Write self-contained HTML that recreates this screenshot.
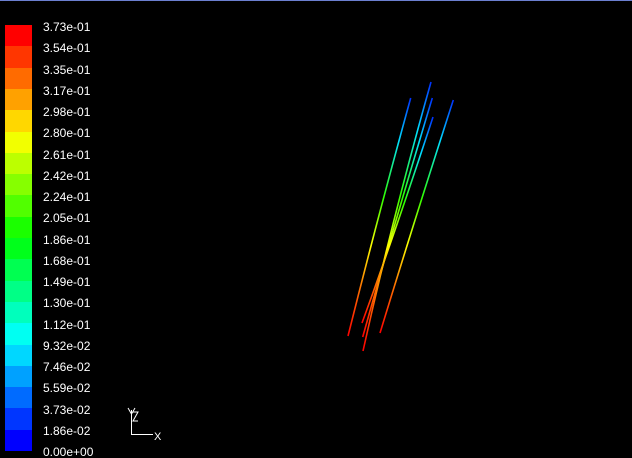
<!DOCTYPE html>
<html><head><style>
html,body{margin:0;padding:0;background:#000;width:632px;height:458px;overflow:hidden;position:relative;font-family:"Liberation Sans",sans-serif}
.top{position:absolute;left:0;top:0;width:632px;height:1px;background:#6b7fd0}
.bar{position:absolute;left:5px;width:27px}
.lbl{position:absolute;left:43px;color:#fff;font-size:12px;line-height:12px}
</style></head><body>
<div class="top"></div>
<div id="c"></div>
<script>
var labels=["3.73e-01","3.54e-01","3.35e-01","3.17e-01","2.98e-01","2.80e-01","2.61e-01","2.42e-01","2.24e-01","2.05e-01","1.86e-01","1.68e-01","1.49e-01","1.30e-01","1.12e-01","9.32e-02","7.46e-02","5.59e-02","3.73e-02","1.86e-02","0.00e+00"];
var h="";
for(var i=0;i<20;i++){var y0=Math.round(25+i*21.3),y1=Math.round(25+(i+1)*21.3);h+='<div class="bar" style="top:'+y0+'px;height:'+(y1-y0)+'px;background:hsl('+(i*240/19)+',100%,50%)"></div>';}
for(var j=0;j<21;j++){h+='<div class="lbl" style="top:'+Math.round(21+j*21.25)+'px">'+labels[j]+'</div>';}
document.getElementById('c').innerHTML=h;
</script>
<svg width="632" height="458" style="position:absolute;left:0;top:0">
<defs><linearGradient id="g" x1="0" y1="0" x2="0" y2="1">
<stop offset="0" stop-color="#0030ff"/><stop offset="0.18" stop-color="#00e0ff"/><stop offset="0.42" stop-color="#30ff00"/><stop offset="0.62" stop-color="#ffff00"/><stop offset="0.8" stop-color="#ff7000"/><stop offset="1" stop-color="#ff0000"/></linearGradient></defs>
<g stroke="url(#g)" stroke-width="1.6" fill="none">
<path d="M410.7 98 Q377 220 348 336"/>
<path d="M431 82 Q392 220 363 351"/>
<path d="M432.3 98 Q394 225 362.7 337"/>
<path d="M433 117 Q396 230 362 323"/>
<path d="M453.3 100 Q413 225 380 333"/>
</g>
<g stroke="#fff" stroke-width="1" fill="none">
<path d="M131.5 410 V434.5 H153"/>
<path d="M128 408 L131.5 414 L135 408"/>
<path d="M133 412 H138 L133 421 H138"/>
</g>
<text x="154" y="440" fill="#fff" font-size="11" font-family="Liberation Sans">X</text>
</svg>
</body></html>
